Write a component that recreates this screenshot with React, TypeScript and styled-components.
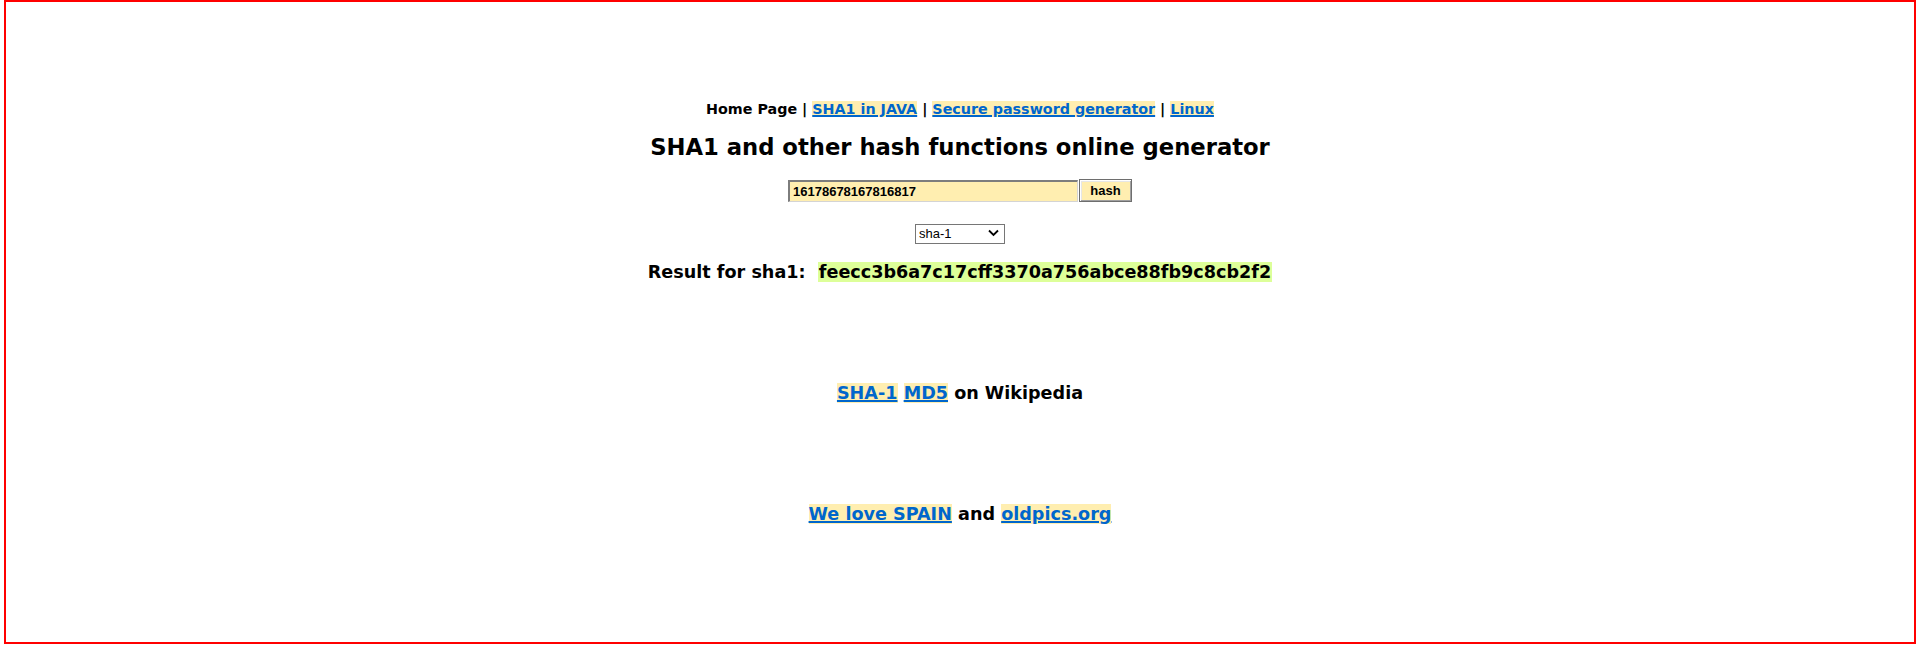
import styled, { createGlobalStyle } from 'styled-components';

const GlobalStyle = createGlobalStyle`
  html, body {
    margin: 0;
    padding: 0;
    background: #ffffff;
  }
  body {
    font-family: "DejaVu Sans", Verdana, sans-serif;
    color: #000000;
  }
`;

const Frame = styled.div`
  box-sizing: border-box;
  height: 644px;
  margin: 0 4px;
  border: 2px solid #ff0000;
  display: flex;
  flex-direction: column;
  align-items: center;
  text-align: center;
`;

const Nav = styled.div`
  margin-top: 98px;
  font-size: 14.3px;
  font-weight: bold;
  line-height: 18px;
  white-space: nowrap;
`;

const Link = styled.a`
  color: #0066cc;
  text-decoration: underline;
  text-decoration-thickness: 1.5px;
  background: #ffeeb0;
  cursor: pointer;
`;

const Title = styled.h1`
  margin: 16px 0 0;
  font-size: 22.7px;
  font-weight: bold;
  line-height: 26px;
  white-space: nowrap;
`;

const FormRow = styled.form`
  margin-top: 19px;
  display: flex;
  align-items: center;
  height: 23px;
`;

const TextInput = styled.input`
  box-sizing: border-box;
  width: 290px;
  height: 22px;
  margin: 0;
  padding: 0 3px;
  border-style: solid;
  border-width: 2px 1px 1px 2px;
  border-color: #7d7d7d #d4d4d4 #d4d4d4 #7d7d7d;
  background: #ffeeb0;
  font-family: "Liberation Sans", Arial, sans-serif;
  font-size: 13px;
  font-weight: bold;
  color: #000;
  outline: none;
`;

const HashButton = styled.button`
  box-sizing: border-box;
  width: 53px;
  height: 23px;
  margin: 0 0 0 1px;
  padding: 0;
  border: 1px solid #6e6e6e;
  box-shadow: inset 1px 1px 0 #ffffff, inset -1px -1px 0 #a0a0a0, inset 2px 2px 0 #e6e6e6;
  background: #ffeeb0;
  font-family: "Liberation Sans", Arial, sans-serif;
  font-size: 13px;
  font-weight: bold;
  color: #000;
`;

const SelectWrap = styled.div`
  position: relative;
  margin-top: 21px;
  width: 90px;
  height: 20px;
`;

const Select = styled.select`
  box-sizing: border-box;
  appearance: none;
  width: 100%;
  height: 100%;
  margin: 0;
  padding: 0 0 0 3px;
  border: 1px solid #767676;
  border-radius: 0;
  background: #ffffff;
  font-family: "Liberation Sans", Arial, sans-serif;
  font-size: 13px;
  color: #000;
  outline: none;
`;

const Chevron = styled.svg`
  position: absolute;
  right: 6px;
  top: 6px;
  pointer-events: none;
`;

const Result = styled.div`
  margin-top: 19px;
  font-size: 17.6px;
  font-weight: bold;
  line-height: 21px;
  white-space: nowrap;
`;

const Hash = styled.span`
  background: #ddff99;
  padding: 0 1px;
`;

const LinkLine = styled.div<{ $gap: number }>`
  margin-top: ${({ $gap }) => $gap}px;
  font-size: 17.6px;
  font-weight: bold;
  line-height: 21px;
  white-space: nowrap;
`;

const App = () => {
  return (
    <>
      <GlobalStyle />
      <Frame>
        <Nav>
          Home Page | <Link>SHA1 in JAVA</Link> | <Link>Secure password generator</Link> |{' '}
          <Link>Linux</Link>
        </Nav>
        <Title>SHA1 and other hash functions online generator</Title>
        <FormRow onSubmit={(e) => e.preventDefault()}>
          <TextInput type="text" defaultValue="16178678167816817" />
          <HashButton type="submit">hash</HashButton>
        </FormRow>
        <SelectWrap>
          <Select defaultValue="sha-1">
            <option value="sha-1">sha-1</option>
            <option value="md5">md5</option>
            <option value="sha-256">sha-256</option>
          </Select>
          <Chevron width="11" height="8" viewBox="0 0 11 8">
            <path d="M1 1.5 L5.5 6 L10 1.5" fill="none" stroke="#000" strokeWidth="1.8" />
          </Chevron>
        </SelectWrap>
        <Result>
          Result for sha1:&nbsp; <Hash>feecc3b6a7c17cff3370a756abce88fb9c8cb2f2</Hash>
        </Result>
        <LinkLine $gap={100}>
          <Link>SHA-1</Link> <Link>MD5</Link> on Wikipedia
        </LinkLine>
        <LinkLine $gap={100}>
          <Link>We love SPAIN</Link> and <Link>oldpics.org</Link>
        </LinkLine>
      </Frame>
    </>
  );
};

export default App;
